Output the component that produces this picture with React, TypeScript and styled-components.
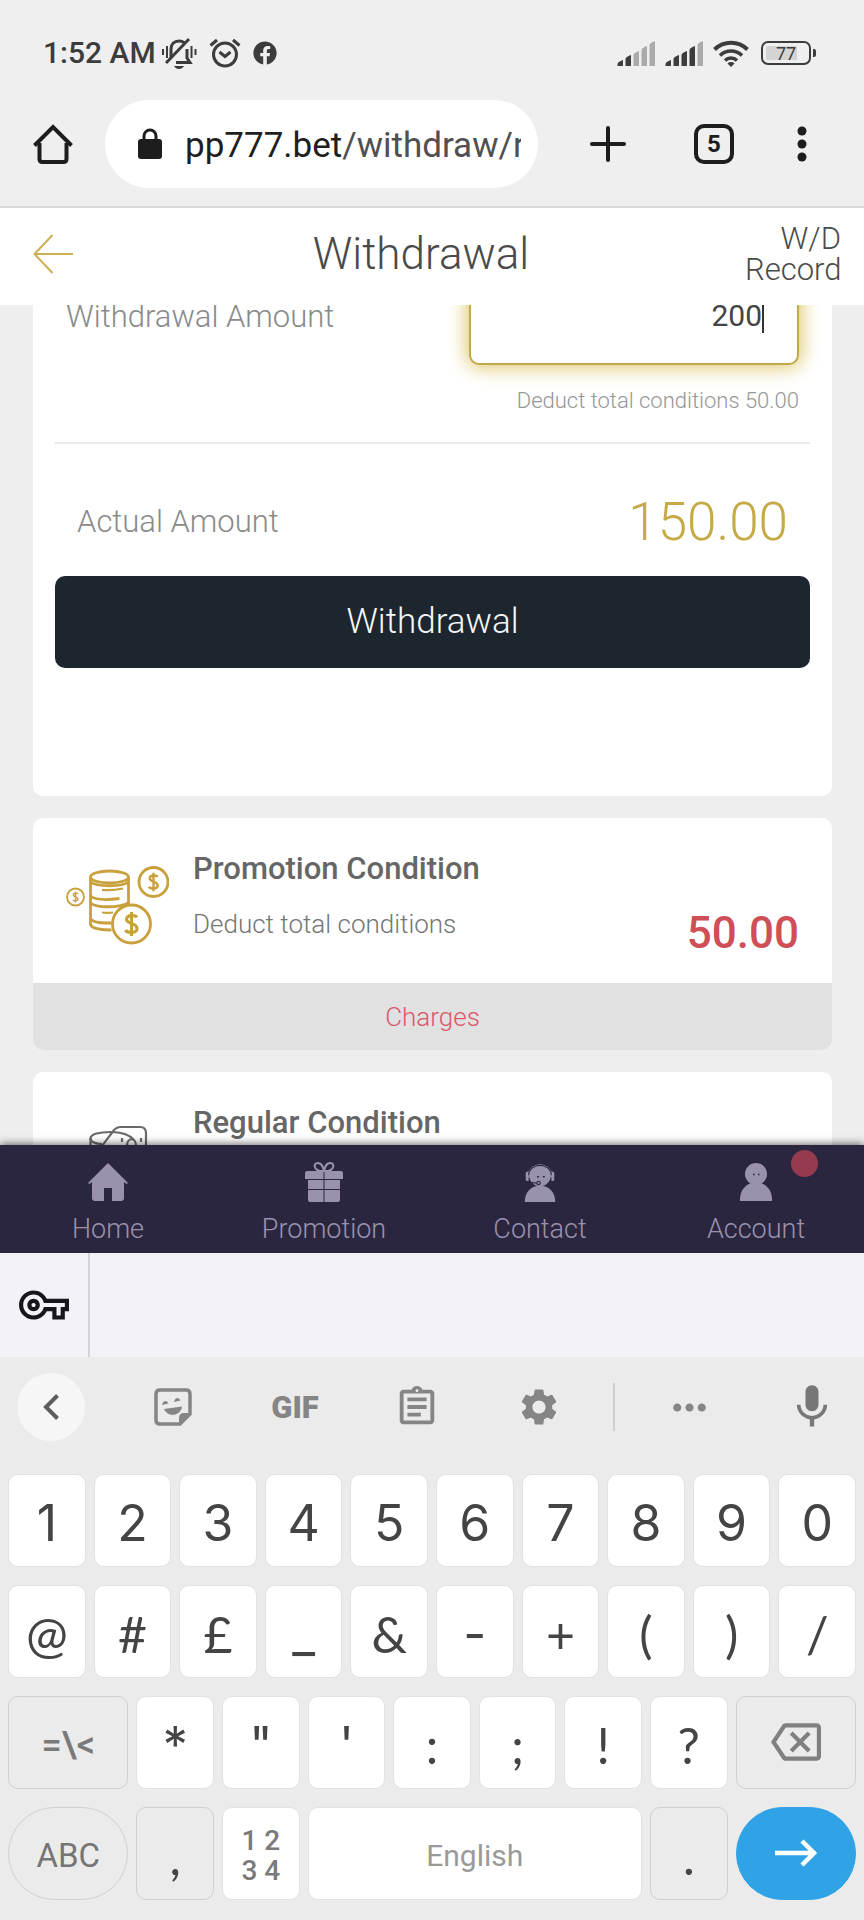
import React from "react";
import styled, { createGlobalStyle } from "styled-components";
import { FaFacebook } from "react-icons/fa";
import {
  MdMic,
  MdMoreHoriz,
  MdOutlineAssignment,
  MdOutlineBackspace,
  MdOutlineVpnKey,
  MdSettings,
} from "react-icons/md";

const GlobalStyle = createGlobalStyle`
  *, *::before, *::after { box-sizing: border-box; }
  body { margin: 0; background: #eeeeee; font-family: Roboto, "Liberation Sans", sans-serif; }
  button, input { font: inherit; color: inherit; margin: 0; }
  button { border: 0; padding: 0; background: none; cursor: pointer; }
  a { color: inherit; text-decoration: none; }
  svg { display: block; flex: none; }
  h1, h2, p { margin: 0; }
`;

const Page = styled.div`
  display: flex;
  flex-direction: column;
  min-height: 100vh;
`;

/* ---------- phone status bar ---------- */

const StatusBar = styled.div`
  display: flex;
  align-items: center;
  height: 100px;
  padding: 6px 48px 0 43px;
  background: #efefef;
  color: #3c3c3c;
`;

const Clock = styled.span`
  font-size: 30px;
  line-height: 36px;
  font-weight: 500;
  margin-right: 5px;
`;

const StatusIcons = styled.div<{ $gap: number }>`
  display: flex;
  align-items: center;
  gap: ${(p) => p.$gap}px;
`;

const Spacer = styled.div`
  flex: 1;
`;

const Battery = styled.div`
  display: flex;
  align-items: center;
  margin-left: 2px;
`;

const BatteryBody = styled.div`
  width: 50px;
  height: 24px;
  border: 2px solid #3c3c3c;
  border-radius: 7px;
  background: linear-gradient(90deg, #d4d4d4 77%, #efefef 77%) content-box;
  padding: 3px;
  font-size: 18px;
  line-height: 15px;
  text-align: center;
`;

const BatteryCap = styled.div`
  width: 3px;
  height: 8px;
  margin-left: 2px;
  border-radius: 0 2px 2px 0;
  background: #3c3c3c;
`;

/* ---------- browser bar ---------- */

const BrowserBar = styled.div`
  display: flex;
  align-items: center;
  padding: 0 27px 18px 33px;
  background: #efefef;
  border-bottom: 2px solid #d9d9d9;
  color: #1d1d1d;
`;

const AddressBar = styled.button`
  display: flex;
  flex: 1;
  min-width: 0;
  align-items: center;
  gap: 23px;
  height: 88px;
  margin: 0 17px 0 32px;
  padding: 0 17px 0 33px;
  border-radius: 44px;
  background: #ffffff;
`;

const Url = styled.span`
  flex: 1;
  overflow: hidden;
  padding-top: 4px;
  white-space: nowrap;
  text-align: left;
  font-size: 35px;
  line-height: 44px;
  color: #1f1f1f;
`;

const UrlPath = styled.span`
  color: #505050;
`;

const BarButton = styled.button<{ $width: number }>`
  display: flex;
  justify-content: center;
  align-items: center;
  width: ${(p) => p.$width}px;
  height: 88px;
`;

const TabCount = styled.span`
  display: grid;
  place-items: center;
  width: 40px;
  height: 40px;
  border: 4px solid #1d1d1d;
  border-radius: 10px;
  font-size: 24px;
  line-height: 28px;
  font-weight: 700;
`;

/* ---------- page header ---------- */

const Header = styled.header`
  display: flex;
  align-items: center;
  height: 97px;
  padding: 0 23px 5px 33px;
  background: #ffffff;
  color: #4a4a4a;
  font-weight: 300;
`;

const BackButton = styled.button`
  width: 64px;
  height: 60px;
`;

const Title = styled.h1`
  flex: 1;
  text-align: center;
  font-size: 44px;
  line-height: 52px;
  font-weight: 300;
`;

const RecordLink = styled.a`
  width: 96px;
  text-align: right;
  font-size: 31px;
  line-height: 31px;
`;

/* ---------- scrolled content ---------- */

const Main = styled.main`
  flex: 1 1 0;
  min-height: 600px;
  overflow: hidden;
  background: #eeeeee;
`;

const Scrolled = styled.div`
  display: flex;
  flex-direction: column;
  gap: 22px;
  margin-top: -60px;
  padding: 0 32px 0 33px;
`;

const Card = styled.section`
  border-radius: 10px;
  background: #ffffff;
  overflow: hidden;
`;

const AmountForm = styled.form`
  display: flex;
  flex-direction: column;
  padding: 16px 22px 128px;
`;

const AmountRow = styled.div`
  display: flex;
  justify-content: space-between;
  padding: 0 11px;
`;

const AmountLabel = styled.label`
  margin-top: 36px;
  font-size: 31px;
  line-height: 40px;
  font-weight: 300;
  color: #8a8a8a;
`;

const InputWrap = styled.div`
  position: relative;
  width: 330px;
`;

const AmountInput = styled.input`
  display: block;
  width: 100%;
  height: 104px;
  padding: 4px 35px 0;
  border: 2px solid #c2a94e;
  border-radius: 10px;
  outline: none;
  background: #ffffff;
  box-shadow: 0 0 20px 2px #dcc365;
  text-align: right;
  font-size: 30px;
  color: #444444;
`;

const Caret = styled.span`
  position: absolute;
  top: 34px;
  right: 35px;
  width: 2px;
  height: 38px;
  background: #333333;
`;

const Hint = styled.p`
  margin-top: 22px;
  padding: 0 11px;
  text-align: right;
  font-size: 22px;
  line-height: 28px;
  font-weight: 300;
  color: #969696;
`;

const Divider = styled.hr`
  width: 100%;
  height: 2px;
  margin: 27px 0 48px;
  border: 0;
  background: #eaeaea;
`;

const ActualRow = styled.div`
  display: flex;
  justify-content: space-between;
  align-items: center;
  padding: 0 22px;
  font-weight: 300;
`;

const ActualLabel = styled.span`
  font-size: 31px;
  line-height: 40px;
  color: #8a8a8a;
`;

const ActualValue = styled.output`
  font-size: 53px;
  line-height: 60px;
  color: #c6aa45;
`;

const SubmitButton = styled.button`
  height: 92px;
  margin-top: 24px;
  padding-bottom: 2px;
  border-radius: 10px;
  background: #1d262e;
  color: #f4f8fb;
  font-size: 35px;
  font-weight: 300;
`;

const ConditionBody = styled.div`
  display: flex;
  gap: 24px;
  padding: 31px 33px 25px 33px;
`;

const ConditionIcon = styled.div`
  width: 103px;
  padding-top: 17px;
`;

const ConditionText = styled.div`
  flex: 1;
  min-height: 109px;
`;

const ConditionTitle = styled.h2`
  font-size: 31px;
  line-height: 40px;
  font-weight: 500;
  color: #666666;
`;

const ConditionNote = styled.p`
  margin-top: 17px;
  font-size: 26px;
  line-height: 36px;
  font-weight: 300;
  color: #757575;
`;

const ConditionValue = styled.strong`
  align-self: flex-end;
  font-size: 44px;
  line-height: 50px;
  font-weight: 500;
  color: #d04e56;
`;

const ChargesButton = styled.button`
  display: block;
  width: 100%;
  height: 67px;
  background: #e1e1e1;
  color: #d9596b;
  font-size: 26px;
  font-weight: 300;
`;

/* ---------- site navigation ---------- */

const Nav = styled.nav`
  position: relative;
  display: grid;
  grid-template-columns: repeat(4, 1fr);
  background: #2b2640;
  box-shadow: 0 -1px 8px rgba(0, 0, 0, 0.6);
`;

const NavItem = styled.a`
  position: relative;
  display: flex;
  flex-direction: column;
  align-items: center;
  gap: 11px;
  padding: 17px 0 8px;
  color: #9a92ac;
  font-size: 27px;
  line-height: 32px;
  font-weight: 300;
`;

const Badge = styled.span`
  position: absolute;
  top: 5px;
  left: calc(50% + 35px);
  width: 27px;
  height: 27px;
  border-radius: 50%;
  background: #963a4e;
`;

/* ---------- on-screen keyboard ---------- */

const Autofill = styled.div`
  position: relative;
  display: flex;
  height: 104px;
  background: #f3f2f8;
`;

const KeyIconButton = styled.button`
  display: grid;
  place-items: center;
  width: 90px;
  border-right: 2px solid #d3d3d8;
  color: #17171b;
`;

const Keyboard = styled.div`
  background: #ebebeb;
  color: #444444;
`;

const Tools = styled.div`
  display: grid;
  grid-template-columns: 112fr repeat(4, 122fr) 28fr 122fr 114fr;
  align-items: center;
  height: 117px;
  padding-bottom: 17px;
  color: #858585;
`;

const Tool = styled.button`
  display: grid;
  place-items: center;
  height: 72px;
  font-size: 31px;
  font-weight: 900;
`;

const CollapseTool = styled(Tool)`
  width: 68px;
  height: 68px;
  margin-left: 17px;
  border-radius: 50%;
  background: #f6f6f6;
  color: #5d5d5d;
`;

const MicTool = styled(Tool)`
  padding-left: 10px;
  color: #777777;
`;

const ToolDivider = styled.span`
  justify-self: center;
  width: 2px;
  height: 48px;
  background: #d0d0d0;
`;

const Keys = styled.div`
  display: grid;
  grid-template-columns: repeat(20, 1fr);
  column-gap: 8px;
  row-gap: 18px;
  padding: 0 8px 20px;
`;

type KeyKind = "plain" | "shaded" | "pill" | "enter";

const keyFill: Record<KeyKind, string> = {
  plain: "#ffffff",
  shaded: "#ebebeb",
  pill: "#ebebeb",
  enter: "#2fa3e6",
};

const keyEdge: Record<KeyKind, string> = {
  plain: "#e2e2e2",
  shaded: "#cfcfcf",
  pill: "#cfcfcf",
  enter: "#2fa3e6",
};

const Key = styled.button<{ $span: number; $kind: KeyKind }>`
  display: grid;
  place-items: center;
  grid-column: span ${(p) => p.$span};
  min-width: 0;
  height: 93px;
  padding-top: 4px;
  border: 1px solid ${(p) => keyEdge[p.$kind]};
  border-radius: ${(p) => (p.$kind === "pill" || p.$kind === "enter" ? 47 : 10)}px;
  background: ${(p) => keyFill[p.$kind]};
  color: ${(p) => (p.$kind === "enter" ? "#ffffff" : "#444444")};
  font-family: Inter, Roboto, sans-serif;
  font-size: 50px;
  line-height: 60px;
`;

const IconKey = styled(Key)`
  padding: 0 0 2px;
`;

const SymbolText = styled.span`
  font-family: Lato, Roboto, sans-serif;
`;

const KeyLabel = styled.span<{ $size: number; $tone: string; $weight: number }>`
  font-family: Roboto, sans-serif;
  font-size: ${(p) => p.$size}px;
  line-height: 30px;
  font-weight: ${(p) => p.$weight};
  color: ${(p) => p.$tone};
`;

/* ---------- drawings ---------- */

const MutedBell = () => (
  <svg width="36" height="32" viewBox="0 0 36 32" fill="none" stroke="#3c3c3c">
    <path d="M10 20V12c0-5 3.500-8 8-8 2 0 3.800 .6 5.200 1.700M26 12v9l3 4.500H15" strokeWidth="3" />
    <path d="M5 26 28 2" strokeWidth="3" />
    <path d="M13 29h10c-1 2-3 3-5 3s-4-1-5-3z" fill="#3c3c3c" stroke="none" />
    <path d="M2 12v6M6 9v12M30.500 9v12M34.500 12v6" strokeWidth="2" />
  </svg>
);

const AlarmClock = () => (
  <svg width="32" height="30" viewBox="0 0 32 30" fill="none" stroke="#3c3c3c" strokeWidth="3">
    <circle cx="16" cy="16.500" r="11.500" />
    <path d="m10.500 14 5.500 4.500 5.500-4.500" />
    <path d="M1.500 7.500 8 2M30.500 7.500 24 2" />
  </svg>
);

const Signal = ({ level }: { level: number }) => (
  <svg width="38" height="25" viewBox="0 0 38 25">
    {[6, 11, 15, 20, 25].map((h, i) => (
      <path
        key={h}
        d={`M${i * 8 + 0.5} 25v-${h - 4}q0-2 5.500-4V25z`}
        fill={i < level ? "#3c3c3c" : "#ababab"}
      />
    ))}
  </svg>
);

const Wifi = () => (
  <svg width="36" height="27" viewBox="0 0 36 27" fill="none" stroke="#3c3c3c" strokeWidth="4">
    <path d="M1.500 9.500a23.500 23.500 0 0 1 33 0" />
    <path d="M7 15.500a15.500 15.500 0 0 1 22 0" strokeWidth="3.500" />
    <path d="M12 20.500a8.500 8.500 0 0 1 12 0" strokeWidth="3.500" />
    <path d="M18 27l-3.500-3.500a5 5 0 0 1 7 0z" fill="#3c3c3c" stroke="none" />
  </svg>
);

const HomeOutline = () => (
  <svg width="40" height="40" viewBox="0 0 40 40" fill="none" stroke="#1d1d1d" strokeWidth="4">
    <path d="M1.500 21.500 20 3l18.500 18.500" />
    <path d="M6.500 19v16q0 3 3 3h21q3 0 3-3V19" />
  </svg>
);

const Padlock = () => (
  <svg width="24" height="32" viewBox="0 0 24 32">
    <path d="M6 12V8a6 6 0 0 1 12 0v4" fill="none" stroke="#1d1d1d" strokeWidth="3" />
    <rect y="11" width="24" height="20" rx="3" fill="#1d1d1d" />
  </svg>
);

const Plus = () => (
  <svg width="36" height="36" viewBox="0 0 36 36" stroke="#1d1d1d" strokeWidth="4" strokeLinecap="round">
    <path d="M18 2v32M2 18h32" />
  </svg>
);

const Dots = () => (
  <svg width="10" height="36" viewBox="0 0 10 36" fill="#1d1d1d">
    <circle cx="5" cy="5" r="4.500" />
    <circle cx="5" cy="18" r="4.500" />
    <circle cx="5" cy="31" r="4.500" />
  </svg>
);

const BackArrow = () => (
  <svg width="40" height="40" viewBox="0 0 40 40" fill="none" stroke="#cdb055" strokeWidth="2">
    <path d="M19.500 1 1.500 20l18 19M1.500 20H40" />
  </svg>
);

const dollar =
  "M5 -6C3.500 -8.500 -4.500 -8.500 -4.500 -4C-4.500 0 5 -1 5 4C5 8.500 -4 8.500 -5.500 5.500M0 -11V11";

const Coins = () => (
  <svg width="103" height="80" viewBox="0 0 103 80" fill="none" stroke="#c8a03c" strokeWidth="2.800">
    <circle cx="9.500" cy="31" r="8.500" strokeWidth="1.800" />
    <path d={dollar} transform="translate(9.500 31) scale(.5)" />
    <circle cx="87.500" cy="16" r="14.500" />
    <path d={dollar} transform="translate(87.500 16) scale(.85)" />
    <ellipse cx="43.500" cy="11" rx="19" ry="6" />
    <path d="M24.500 11v47c0 4 10 6 21 6M62.500 11v27" />
    <path d="M24.500 16c6 5 32 5 38 0M24.500 30c5 4 18 4 29 2.500M24.500 37c5 5 28 5 38 0M24.500 53c4 4 12 4 21 4" />
    <path d="M36 24c7 .5 14 0 21-1.500M36 46.500c4 .5 7 .5 11 0" strokeWidth="2.200" />
    <circle cx="65.500" cy="58" r="19" fill="#ffffff" />
    <path d={dollar} transform="translate(65.500 58) scale(1.100)" />
  </svg>
);

const Banknotes = () => (
  <svg width="103" height="80" viewBox="0 0 103 80" fill="none" stroke="#6a6a6a" strokeWidth="2.200">
    <path d="M36 26 48 10q3-3 6-3h20q6 0 6 6v30H40" />
    <path d="M36 24c-6 0-11.500-2-11.500-5.500C24.500 14 34 12 44 12c12 0 20 3 24 8" />
    <path d="M24.500 18v30c0 4 10 6 20 6M56 22v-4M61 26c0-9 9-9 9 0M75 22v-4" />
  </svg>
);

const NavHome = () => (
  <svg width="42" height="40" viewBox="0 0 42 40" fill="currentColor">
    <path d="M21 1 41 21l-1.500 1L37 20v16q0 3-3 3h-9V26h-8v13H8q-3 0-3-3V20l-2.500 2L1 21z" />
  </svg>
);

const NavGift = () => (
  <svg width="40" height="40" viewBox="0 0 40 40" fill="currentColor">
    <path
      d="M20 9C10 10 8 1 14 1c4 0 5 4 6 8 1-4 2-8 6-8 6 0 4 9-6 8z"
      fill="none"
      stroke="currentColor"
      strokeWidth="2"
    />
    <path d="M3 9h16.500v8H1v-6q0-2 2-2zM20.500 9H37q2 0 2 2v6H20.500zM4 18h15.500v9H4zM20.500 18H36v9H20.500zM4 28h15.500v12H6q-2 0-2-2zM20.500 28H36v10q0 2-2 2H20.500z" />
  </svg>
);

const NavContact = () => (
  <svg width="34" height="40" viewBox="0 0 34 42" fill="currentColor">
    <circle cx="17" cy="14" r="11.500" />
    <path d="M4.500 16a12.500 12.500 0 1 1 25 0" fill="none" stroke="currentColor" strokeWidth="2" />
    <path d="M2 12q0-2 2-2h1v10H4q-2 0-2-2zM32 12q0-2-2-2h-1v10h1q2 0 2-2z" />
    <path d="M5 14c1-14 23-14 24 0" fill="none" stroke="#2b2640" strokeWidth="1.200" />
    <path d="M4 20.500c3 1.500 7 1.500 10 1.500" fill="none" stroke="#2b2640" strokeWidth="1.200" />
    <circle cx="15.500" cy="22" r="1.800" stroke="#2b2640" strokeWidth="1.200" />
    <path d="M14 15.500h2M20 15.500h2" stroke="#2b2640" strokeWidth="1.500" />
    <path d="M1 42C1 31 8 25 17 25s16 6 16 17z" />
  </svg>
);

const NavAccount = () => (
  <svg width="34" height="40" viewBox="0 0 34 40" fill="currentColor">
    <circle cx="17" cy="12" r="11" />
    <path d="M1 39V37c0-9 6-14 10-15.500h12C27 23 33 28 33 37v2z" />
    <path d="M14 12.500h1.500M19 12.500h1.500" stroke="#2b2640" strokeWidth="1.500" />
  </svg>
);

const ChevronLeft = () => (
  <svg width="18" height="28" viewBox="0 0 18 28" fill="none" stroke="currentColor" strokeWidth="4">
    <path d="M15.500 2.500 4 14l11.500 11.500" />
  </svg>
);

const Sticker = () => (
  <svg width="38" height="38" viewBox="0 0 38 38" fill="none" stroke="currentColor">
    <path d="M6 2h26q4 0 4 4v20L26 36H6q-4 0-4-4V6q0-4 4-4z" strokeWidth="3.500" />
    <path d="M25 36v-6q0-5 5-5h6z" fill="currentColor" stroke="none" />
    <path
      d="M8 17c1-5 5-5 6.500-1.500zM20 14c1-5 5-5 6.500-1.500zM10 21l18-2.500C27 28 14 30 10 21z"
      fill="currentColor"
      stroke="none"
    />
  </svg>
);

const EnterArrow = () => (
  <svg width="44" height="28" viewBox="0 0 44 28" fill="none" stroke="currentColor" strokeWidth="4.500">
    <path d="M1 14h39M28 2l12 12-12 12" />
  </svg>
);

const digits = ["1", "2", "3", "4", "5", "6", "7", "8", "9", "0"];
const symbols = ["@", "#", "£", "_", "&", "-", "+", "(", ")", "/"];
const marks = ["*", '"', "'", ":", ";", "!", "?"];

/* These glyphs use the digits' face, which draws them wider and heavier. */
const digitFace = new Set(["_", "-", "*", '"', "'"]);

const CharKey = ({ char, kind = "plain" }: { char: string; kind?: KeyKind }) => (
  <Key $span={2} $kind={kind} type="button">
    {digitFace.has(char) ? char : <SymbolText>{char}</SymbolText>}
  </Key>
);

export default function App() {
  return (
    <>
      <GlobalStyle />
      <Page>
        <StatusBar>
          <Clock>1:52 AM</Clock>
          <StatusIcons $gap={12}>
            <MutedBell />
            <AlarmClock />
            <FaFacebook size={24} />
          </StatusIcons>
          <Spacer />
          <StatusIcons $gap={10}>
            <Signal level={2} />
            <Signal level={4} />
            <Wifi />
            <Battery>
              <BatteryBody>77</BatteryBody>
              <BatteryCap />
            </Battery>
          </StatusIcons>
        </StatusBar>

        <BrowserBar>
          <button type="button" aria-label="Home page">
            <HomeOutline />
          </button>
          <AddressBar type="button">
            <Padlock />
            <Url>
              pp777.bet<UrlPath>/withdraw/r</UrlPath>
            </Url>
          </AddressBar>
          <BarButton $width={106} type="button" aria-label="New tab">
            <Plus />
          </BarButton>
          <BarButton $width={106} type="button" aria-label="Tabs">
            <TabCount>5</TabCount>
          </BarButton>
          <BarButton $width={70} type="button" aria-label="Menu">
            <Dots />
          </BarButton>
        </BrowserBar>

        <Header>
          <BackButton type="button" aria-label="Back">
            <BackArrow />
          </BackButton>
          <Title>Withdrawal</Title>
          <RecordLink href="#record">W/D Record</RecordLink>
        </Header>

        <Main>
          <Scrolled>
            <Card>
              <AmountForm onSubmit={(e) => e.preventDefault()}>
                <AmountRow>
                  <AmountLabel htmlFor="amount">Withdrawal Amount</AmountLabel>
                  <InputWrap>
                    <AmountInput id="amount" inputMode="decimal" defaultValue="200" />
                    <Caret />
                  </InputWrap>
                </AmountRow>
                <Hint>Deduct total conditions 50.00</Hint>
                <Divider />
                <ActualRow>
                  <ActualLabel>Actual Amount</ActualLabel>
                  <ActualValue htmlFor="amount">150.00</ActualValue>
                </ActualRow>
                <SubmitButton type="submit">Withdrawal</SubmitButton>
              </AmountForm>
            </Card>

            <Card>
              <ConditionBody>
                <ConditionIcon>
                  <Coins />
                </ConditionIcon>
                <ConditionText>
                  <ConditionTitle>Promotion Condition</ConditionTitle>
                  <ConditionNote>Deduct total conditions</ConditionNote>
                </ConditionText>
                <ConditionValue>50.00</ConditionValue>
              </ConditionBody>
              <ChargesButton type="button">Charges</ChargesButton>
            </Card>

            <Card>
              <ConditionBody>
                <ConditionIcon>
                  <Banknotes />
                </ConditionIcon>
                <ConditionText>
                  <ConditionTitle>Regular Condition</ConditionTitle>
                </ConditionText>
              </ConditionBody>
            </Card>
          </Scrolled>
        </Main>

        <Nav>
          <NavItem href="#home">
            <NavHome />
            Home
          </NavItem>
          <NavItem href="#promotion">
            <NavGift />
            Promotion
          </NavItem>
          <NavItem href="#contact">
            <NavContact />
            Contact
          </NavItem>
          <NavItem href="#account">
            <NavAccount />
            Account
            <Badge />
          </NavItem>
        </Nav>

        <Autofill>
          <KeyIconButton type="button" aria-label="Saved passwords">
            <MdOutlineVpnKey size={50} />
          </KeyIconButton>
        </Autofill>

        <Keyboard>
          <Tools>
            <CollapseTool type="button" aria-label="Collapse">
              <ChevronLeft />
            </CollapseTool>
            <Tool type="button" aria-label="Stickers">
              <Sticker />
            </Tool>
            <Tool type="button">GIF</Tool>
            <Tool type="button" aria-label="Clipboard">
              <MdOutlineAssignment size={46} />
            </Tool>
            <Tool type="button" aria-label="Settings">
              <MdSettings size={44} />
            </Tool>
            <ToolDivider />
            <Tool type="button" aria-label="More">
              <MdMoreHoriz size={49} />
            </Tool>
            <MicTool type="button" aria-label="Voice input">
              <MdMic size={52} />
            </MicTool>
          </Tools>

          <Keys>
            {digits.map((d) => (
              <Key key={d} $span={2} $kind="plain" type="button">
                {d}
              </Key>
            ))}
            {symbols.map((s) => (
              <CharKey key={s} char={s} />
            ))}
            <Key $span={3} $kind="shaded" type="button">
              <KeyLabel $size={36} $tone="#7a7a7a" $weight={500}>
                =\&lt;
              </KeyLabel>
            </Key>
            {marks.map((m) => (
              <CharKey key={m} char={m} />
            ))}
            <IconKey $span={3} $kind="shaded" type="button" aria-label="Backspace">
              <MdOutlineBackspace size={50} color="#808080" />
            </IconKey>
            <Key $span={3} $kind="pill" type="button">
              <KeyLabel $size={33} $tone="#757575" $weight={400}>
                ABC
              </KeyLabel>
            </Key>
            <CharKey char="," kind="shaded" />
            <Key $span={2} $kind="plain" type="button">
              <KeyLabel $size={28} $tone="#7a7a7a" $weight={500}>
                1 2<br />3 4
              </KeyLabel>
            </Key>
            <Key $span={8} $kind="plain" type="button">
              <KeyLabel $size={30} $tone="#9a9a9a" $weight={400}>
                English
              </KeyLabel>
            </Key>
            <CharKey char="." kind="shaded" />
            <IconKey $span={3} $kind="enter" type="button" aria-label="Next">
              <EnterArrow />
            </IconKey>
          </Keys>
        </Keyboard>
      </Page>
    </>
  );
}
